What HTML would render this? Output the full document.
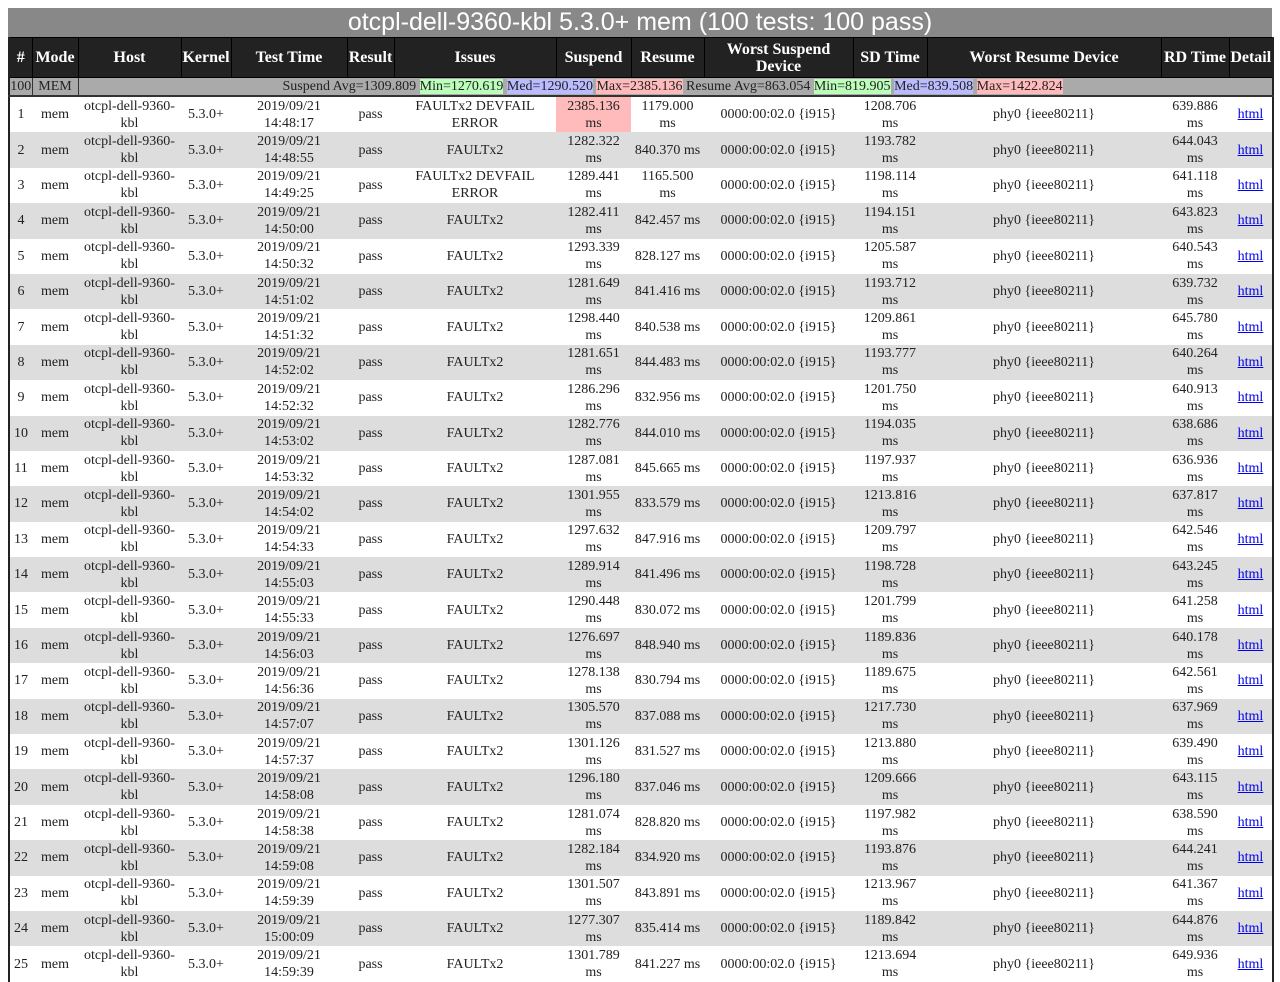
<!DOCTYPE html>
<html><head><meta charset="utf-8"><style>
body{margin:0;background:#fff;font-family:"Liberation Serif",serif;font-size:14px;color:#222;overflow:hidden;width:1280px;height:960px}
.title{position:absolute;left:8px;top:8px;width:1264px;height:29px;background:#888;color:#fff;font-family:"Liberation Sans",sans-serif;font-size:25px;text-align:center;line-height:29px}
table{position:absolute;left:8px;top:37px;width:1264px;border-collapse:collapse;table-layout:fixed;border-left:2px solid #222;border-right:2px solid #222}
th{background:#222;color:#fff;font-size:16px;font-weight:bold;height:39px;padding:0;border:1px solid #000;line-height:17px}
tr.sum td{background:#aaa;height:17px;padding:0;line-height:17px;font-size:14px;border-bottom:2px solid #333;border-right:1px solid #333}
td{padding:0 2px;text-align:center;height:35.4px;line-height:17px;vertical-align:middle}
tr.b td{background:#ddd}
a{color:#00e;text-decoration:underline}
.g{background:#bfb}.bl{background:#bbf}.r{background:#fbb}
</style></head><body>
<div class="title">otcpl-dell-9360-kbl 5.3.0+ mem (100 tests: 100 pass)</div>
<table>
<colgroup><col style="width:23px"><col style="width:46px"><col style="width:103px"><col style="width:50px"><col style="width:116px"><col style="width:47px"><col style="width:162px"><col style="width:75px"><col style="width:73px"><col style="width:149px"><col style="width:74px"><col style="width:234px"><col style="width:68px"><col style="width:44px"></colgroup>
<tr><th>#</th><th>Mode</th><th>Host</th><th>Kernel</th><th>Test Time</th><th>Result</th><th>Issues</th><th>Suspend</th><th>Resume</th><th>Worst Suspend<br>Device</th><th>SD Time</th><th>Worst Resume Device</th><th>RD Time</th><th>Detail</th></tr>
<tr class="sum"><td>100</td><td>MEM</td><td colspan="12" style="text-align:left;padding-left:204px">Suspend Avg=1309.809 <span class="g">Min=1270.619</span> <span class="bl">Med=1290.520</span> <span class="r">Max=2385.136</span> Resume Avg=863.054 <span class="g">Min=819.905</span> <span class="bl">Med=839.508</span> <span class="r">Max=1422.824</span></td></tr>
<tr><td>1</td><td>mem</td><td>otcpl-dell-9360-<br>kbl</td><td>5.3.0+</td><td>2019/09/21<br>14:48:17</td><td>pass</td><td>FAULTx2 DEVFAIL<br>ERROR</td><td style="background:#fbb">2385.136<br>ms</td><td>1179.000<br>ms</td><td>0000:00:02.0 {i915}</td><td>1208.706<br>ms</td><td>phy0 {ieee80211}</td><td>639.886<br>ms</td><td><a>html</a></td></tr>
<tr class="b"><td>2</td><td>mem</td><td>otcpl-dell-9360-<br>kbl</td><td>5.3.0+</td><td>2019/09/21<br>14:48:55</td><td>pass</td><td>FAULTx2</td><td>1282.322<br>ms</td><td>840.370 ms</td><td>0000:00:02.0 {i915}</td><td>1193.782<br>ms</td><td>phy0 {ieee80211}</td><td>644.043<br>ms</td><td><a>html</a></td></tr>
<tr><td>3</td><td>mem</td><td>otcpl-dell-9360-<br>kbl</td><td>5.3.0+</td><td>2019/09/21<br>14:49:25</td><td>pass</td><td>FAULTx2 DEVFAIL<br>ERROR</td><td>1289.441<br>ms</td><td>1165.500<br>ms</td><td>0000:00:02.0 {i915}</td><td>1198.114<br>ms</td><td>phy0 {ieee80211}</td><td>641.118<br>ms</td><td><a>html</a></td></tr>
<tr class="b"><td>4</td><td>mem</td><td>otcpl-dell-9360-<br>kbl</td><td>5.3.0+</td><td>2019/09/21<br>14:50:00</td><td>pass</td><td>FAULTx2</td><td>1282.411<br>ms</td><td>842.457 ms</td><td>0000:00:02.0 {i915}</td><td>1194.151<br>ms</td><td>phy0 {ieee80211}</td><td>643.823<br>ms</td><td><a>html</a></td></tr>
<tr><td>5</td><td>mem</td><td>otcpl-dell-9360-<br>kbl</td><td>5.3.0+</td><td>2019/09/21<br>14:50:32</td><td>pass</td><td>FAULTx2</td><td>1293.339<br>ms</td><td>828.127 ms</td><td>0000:00:02.0 {i915}</td><td>1205.587<br>ms</td><td>phy0 {ieee80211}</td><td>640.543<br>ms</td><td><a>html</a></td></tr>
<tr class="b"><td>6</td><td>mem</td><td>otcpl-dell-9360-<br>kbl</td><td>5.3.0+</td><td>2019/09/21<br>14:51:02</td><td>pass</td><td>FAULTx2</td><td>1281.649<br>ms</td><td>841.416 ms</td><td>0000:00:02.0 {i915}</td><td>1193.712<br>ms</td><td>phy0 {ieee80211}</td><td>639.732<br>ms</td><td><a>html</a></td></tr>
<tr><td>7</td><td>mem</td><td>otcpl-dell-9360-<br>kbl</td><td>5.3.0+</td><td>2019/09/21<br>14:51:32</td><td>pass</td><td>FAULTx2</td><td>1298.440<br>ms</td><td>840.538 ms</td><td>0000:00:02.0 {i915}</td><td>1209.861<br>ms</td><td>phy0 {ieee80211}</td><td>645.780<br>ms</td><td><a>html</a></td></tr>
<tr class="b"><td>8</td><td>mem</td><td>otcpl-dell-9360-<br>kbl</td><td>5.3.0+</td><td>2019/09/21<br>14:52:02</td><td>pass</td><td>FAULTx2</td><td>1281.651<br>ms</td><td>844.483 ms</td><td>0000:00:02.0 {i915}</td><td>1193.777<br>ms</td><td>phy0 {ieee80211}</td><td>640.264<br>ms</td><td><a>html</a></td></tr>
<tr><td>9</td><td>mem</td><td>otcpl-dell-9360-<br>kbl</td><td>5.3.0+</td><td>2019/09/21<br>14:52:32</td><td>pass</td><td>FAULTx2</td><td>1286.296<br>ms</td><td>832.956 ms</td><td>0000:00:02.0 {i915}</td><td>1201.750<br>ms</td><td>phy0 {ieee80211}</td><td>640.913<br>ms</td><td><a>html</a></td></tr>
<tr class="b"><td>10</td><td>mem</td><td>otcpl-dell-9360-<br>kbl</td><td>5.3.0+</td><td>2019/09/21<br>14:53:02</td><td>pass</td><td>FAULTx2</td><td>1282.776<br>ms</td><td>844.010 ms</td><td>0000:00:02.0 {i915}</td><td>1194.035<br>ms</td><td>phy0 {ieee80211}</td><td>638.686<br>ms</td><td><a>html</a></td></tr>
<tr><td>11</td><td>mem</td><td>otcpl-dell-9360-<br>kbl</td><td>5.3.0+</td><td>2019/09/21<br>14:53:32</td><td>pass</td><td>FAULTx2</td><td>1287.081<br>ms</td><td>845.665 ms</td><td>0000:00:02.0 {i915}</td><td>1197.937<br>ms</td><td>phy0 {ieee80211}</td><td>636.936<br>ms</td><td><a>html</a></td></tr>
<tr class="b"><td>12</td><td>mem</td><td>otcpl-dell-9360-<br>kbl</td><td>5.3.0+</td><td>2019/09/21<br>14:54:02</td><td>pass</td><td>FAULTx2</td><td>1301.955<br>ms</td><td>833.579 ms</td><td>0000:00:02.0 {i915}</td><td>1213.816<br>ms</td><td>phy0 {ieee80211}</td><td>637.817<br>ms</td><td><a>html</a></td></tr>
<tr><td>13</td><td>mem</td><td>otcpl-dell-9360-<br>kbl</td><td>5.3.0+</td><td>2019/09/21<br>14:54:33</td><td>pass</td><td>FAULTx2</td><td>1297.632<br>ms</td><td>847.916 ms</td><td>0000:00:02.0 {i915}</td><td>1209.797<br>ms</td><td>phy0 {ieee80211}</td><td>642.546<br>ms</td><td><a>html</a></td></tr>
<tr class="b"><td>14</td><td>mem</td><td>otcpl-dell-9360-<br>kbl</td><td>5.3.0+</td><td>2019/09/21<br>14:55:03</td><td>pass</td><td>FAULTx2</td><td>1289.914<br>ms</td><td>841.496 ms</td><td>0000:00:02.0 {i915}</td><td>1198.728<br>ms</td><td>phy0 {ieee80211}</td><td>643.245<br>ms</td><td><a>html</a></td></tr>
<tr><td>15</td><td>mem</td><td>otcpl-dell-9360-<br>kbl</td><td>5.3.0+</td><td>2019/09/21<br>14:55:33</td><td>pass</td><td>FAULTx2</td><td>1290.448<br>ms</td><td>830.072 ms</td><td>0000:00:02.0 {i915}</td><td>1201.799<br>ms</td><td>phy0 {ieee80211}</td><td>641.258<br>ms</td><td><a>html</a></td></tr>
<tr class="b"><td>16</td><td>mem</td><td>otcpl-dell-9360-<br>kbl</td><td>5.3.0+</td><td>2019/09/21<br>14:56:03</td><td>pass</td><td>FAULTx2</td><td>1276.697<br>ms</td><td>848.940 ms</td><td>0000:00:02.0 {i915}</td><td>1189.836<br>ms</td><td>phy0 {ieee80211}</td><td>640.178<br>ms</td><td><a>html</a></td></tr>
<tr><td>17</td><td>mem</td><td>otcpl-dell-9360-<br>kbl</td><td>5.3.0+</td><td>2019/09/21<br>14:56:36</td><td>pass</td><td>FAULTx2</td><td>1278.138<br>ms</td><td>830.794 ms</td><td>0000:00:02.0 {i915}</td><td>1189.675<br>ms</td><td>phy0 {ieee80211}</td><td>642.561<br>ms</td><td><a>html</a></td></tr>
<tr class="b"><td>18</td><td>mem</td><td>otcpl-dell-9360-<br>kbl</td><td>5.3.0+</td><td>2019/09/21<br>14:57:07</td><td>pass</td><td>FAULTx2</td><td>1305.570<br>ms</td><td>837.088 ms</td><td>0000:00:02.0 {i915}</td><td>1217.730<br>ms</td><td>phy0 {ieee80211}</td><td>637.969<br>ms</td><td><a>html</a></td></tr>
<tr><td>19</td><td>mem</td><td>otcpl-dell-9360-<br>kbl</td><td>5.3.0+</td><td>2019/09/21<br>14:57:37</td><td>pass</td><td>FAULTx2</td><td>1301.126<br>ms</td><td>831.527 ms</td><td>0000:00:02.0 {i915}</td><td>1213.880<br>ms</td><td>phy0 {ieee80211}</td><td>639.490<br>ms</td><td><a>html</a></td></tr>
<tr class="b"><td>20</td><td>mem</td><td>otcpl-dell-9360-<br>kbl</td><td>5.3.0+</td><td>2019/09/21<br>14:58:08</td><td>pass</td><td>FAULTx2</td><td>1296.180<br>ms</td><td>837.046 ms</td><td>0000:00:02.0 {i915}</td><td>1209.666<br>ms</td><td>phy0 {ieee80211}</td><td>643.115<br>ms</td><td><a>html</a></td></tr>
<tr><td>21</td><td>mem</td><td>otcpl-dell-9360-<br>kbl</td><td>5.3.0+</td><td>2019/09/21<br>14:58:38</td><td>pass</td><td>FAULTx2</td><td>1281.074<br>ms</td><td>828.820 ms</td><td>0000:00:02.0 {i915}</td><td>1197.982<br>ms</td><td>phy0 {ieee80211}</td><td>638.590<br>ms</td><td><a>html</a></td></tr>
<tr class="b"><td>22</td><td>mem</td><td>otcpl-dell-9360-<br>kbl</td><td>5.3.0+</td><td>2019/09/21<br>14:59:08</td><td>pass</td><td>FAULTx2</td><td>1282.184<br>ms</td><td>834.920 ms</td><td>0000:00:02.0 {i915}</td><td>1193.876<br>ms</td><td>phy0 {ieee80211}</td><td>644.241<br>ms</td><td><a>html</a></td></tr>
<tr><td>23</td><td>mem</td><td>otcpl-dell-9360-<br>kbl</td><td>5.3.0+</td><td>2019/09/21<br>14:59:39</td><td>pass</td><td>FAULTx2</td><td>1301.507<br>ms</td><td>843.891 ms</td><td>0000:00:02.0 {i915}</td><td>1213.967<br>ms</td><td>phy0 {ieee80211}</td><td>641.367<br>ms</td><td><a>html</a></td></tr>
<tr class="b"><td>24</td><td>mem</td><td>otcpl-dell-9360-<br>kbl</td><td>5.3.0+</td><td>2019/09/21<br>15:00:09</td><td>pass</td><td>FAULTx2</td><td>1277.307<br>ms</td><td>835.414 ms</td><td>0000:00:02.0 {i915}</td><td>1189.842<br>ms</td><td>phy0 {ieee80211}</td><td>644.876<br>ms</td><td><a>html</a></td></tr>
<tr><td>25</td><td>mem</td><td>otcpl-dell-9360-<br>kbl</td><td>5.3.0+</td><td>2019/09/21<br>14:59:39</td><td>pass</td><td>FAULTx2</td><td>1301.789<br>ms</td><td>841.227 ms</td><td>0000:00:02.0 {i915}</td><td>1213.694<br>ms</td><td>phy0 {ieee80211}</td><td>649.936<br>ms</td><td><a>html</a></td></tr>
</table>
</body></html>
